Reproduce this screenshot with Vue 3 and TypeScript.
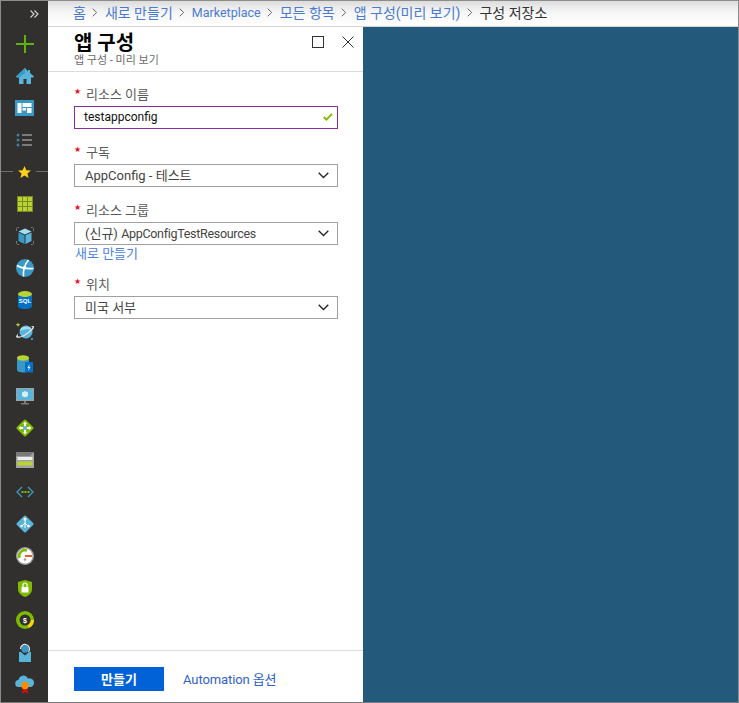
<script setup lang="ts">
const crumbs: string[] = ['홈', '새로 만들기', 'Marketplace', '모든 항목', '앱 구성(미리 보기)']
</script>

<template>
  <div class="frame">
    <aside class="rail">
      <div class="collapse">
        <svg width="9" height="8" viewBox="0 0 9 8" fill="none" stroke="#d8d8d8" stroke-width="1.1"><path d="M.5.5L4 4 .5 7.500M4.500.5L8 4 4.500 7.500" /></svg>
      </div>
      <div class="ico"><svg width="20" height="20" viewBox="0 0 20 20"><path d="M9 1h2v8h8v2h-8v8H9v-8H1V9h8z" fill="#5fb40b" /></svg></div>
      <div class="ico"><svg width="20" height="20" viewBox="0 0 20 20"><path d="M10 2L1 10.500l1 1h2V18h4.500v-5h3v5H16v-6.500h2l1-1L15 7V4h-2v1.500z" fill="#59b4d9" /><path d="M10 2v5l-6 4.500H2l-1-1z" fill="#3999c6" /></svg></div>
      <div class="ico"><svg width="19" height="16" viewBox="0 0 19 16"><rect width="19" height="16" fill="#3999c6" /><path d="M2.500 3h4v10h-4zM7.500 3h9v4h-9zM7.500 8h3.500v2.500H7.500zM12 8h4.500v5H12z" fill="#fff" /></svg></div>
      <div class="ico"><svg width="18" height="14" viewBox="0 0 18 14"><g fill="#3a7ea3"><circle cx="2" cy="2" r="1.500" /><circle cx="2" cy="7" r="1.500" /><circle cx="2" cy="12" r="1.500" /></g><g fill="#7a7a7a"><rect x="6" y="1" width="10" height="2" /><rect x="6" y="6" width="10" height="2" /><rect x="6" y="11" width="10" height="2" /></g></svg></div>
      <div class="ico star-row">
        <span class="tick"></span>
        <svg width="13" height="12" viewBox="0 0 14 13"><path d="M7 0l2 4.500 5 .4-3.800 3.200L11.400 13 7 10.400 2.600 13l1.200-4.900L0 4.900l5-.4z" fill="#fcd116" /></svg>
        <span class="tick"></span>
      </div>
      <div class="ico"><svg width="16" height="16" viewBox="0 0 16 16"><rect width="16" height="16" fill="#7a8a20" /><g fill="#b8d432"><rect x="1" y="1" width="4" height="4" /><rect x="6" y="1" width="4" height="4" /><rect x="11" y="1" width="4" height="4" /><rect x="1" y="6" width="4" height="4" /><rect x="6" y="6" width="4" height="4" /><rect x="11" y="6" width="4" height="4" /><rect x="1" y="11" width="4" height="4" /><rect x="6" y="11" width="4" height="4" /><rect x="11" y="11" width="4" height="4" /></g></svg></div>
      <div class="ico"><svg width="18" height="18" viewBox="0 0 18 18"><path d="M.5 4V1.500C.5 1 1 .5 2 .5h1M17.500 4V1.500c0-.5-.5-1-1.500-1h-1M.5 14v2.500c0 .5.500 1 1.500 1h1M17.500 14v2.500c0 .5-.5 1-1.500 1h-1" fill="none" stroke="#777" /><path d="M9 1.500l6.500 3L9 7.500l-6.500-3z" fill="#9fe0f5" /><path d="M2.500 5.500l6 2.800V17l-6-3z" fill="#3999c6" /><path d="M15.500 5.500l-6 2.800V17l6-3z" fill="#59b4d9" /></svg></div>
      <div class="ico"><svg width="18" height="18" viewBox="0 0 18 18"><circle cx="9" cy="9" r="9" fill="#3999c6" /><g fill="none" stroke="#fff" stroke-width="1.600"><path d="M1 6.500C5 9 11 10 17.500 9.500" /><path d="M12.500 1C9 5 7 11 7.500 17.500" /></g><circle cx="8.500" cy="8.800" r="1.800" fill="#fff" /></svg></div>
      <div class="ico"><svg width="14" height="18" viewBox="0 0 14 18"><path d="M0 3v12c0 1.800 3 3 7 3s7-1.200 7-3V3z" fill="#0072c6" /><ellipse cx="7" cy="3" rx="7" ry="3" fill="#b8d432" /><text x="7" y="12" text-anchor="middle" class="sql">SQL</text></svg></div>
      <div class="ico"><svg width="20" height="20" viewBox="0 0 20 20"><circle cx="11" cy="10" r="6.500" fill="#59b4d9" /><path d="M5 9a6 4 0 0 1 12-1c-3-1-8-1-12 1z" fill="#a5dcf0" /><path d="M15 4.500c3-1 4.500-.5 4 1-.6 2-4 5-8 7.500-4 2.400-8 3.500-9.500 2.500-1-.8 0-2.500 2-4.500-.8 1.600-1 2.800-.4 3.300 1 .7 4-.3 7.400-2.400C14 9.800 17 7 17.500 5.600 17.800 4.800 16.500 4.600 15 4.500z" fill="#e8e8e8" /><path d="M3 .5l.7 1.600 1.600.7-1.600.7L3 5.100l-.7-1.600L.7 2.800l1.600-.7z" fill="#b8d432" /><rect x="16" y="16" width="2" height="2" fill="#3999c6" /></svg></div>
      <div class="ico"><svg width="16" height="18" viewBox="0 0 16 18"><path d="M0 3v12c0 1.500 2.500 2.500 6 2.500V3z" fill="#3999c6" /><path d="M6 3h6v5H8v9.500H6z" fill="#3999c6" /><ellipse cx="6" cy="3" rx="6" ry="2.700" fill="#b8d432" /><rect x="8" y="7" width="8" height="10.500" fill="#0072c6" /><path d="M12.500 9l-2 4h1.300l-.8 3 2.500-4h-1.300z" fill="#fff" /></svg></div>
      <div class="ico"><svg width="18" height="17" viewBox="0 0 18 17"><rect width="18" height="13" fill="#a0a1a2" /><rect x="1" y="1" width="16" height="11" fill="#59b4d9" /><path d="M9 3l3 1.500v3.500L9 9.500 6 8V4.500z" fill="#d8eef7" /><rect x="8" y="13" width="2" height="2" fill="#7a7a7a" /><rect x="5" y="15" width="8" height="1.500" fill="#7a7a7a" /></svg></div>
      <div class="ico"><svg width="18" height="18" viewBox="0 0 18 18"><path d="M9 .5a1.500 1.500 0 0 1 1 .4L17.100 8a1.400 1.400 0 0 1 0 2L10 17.100a1.400 1.400 0 0 1-2 0L.9 10a1.400 1.400 0 0 1 0-2L8 .9A1.500 1.500 0 0 1 9 .5z" fill="#7fba00" /><path d="M9 2.500L11 5H10v3h3V7l2.500 2-2.500 2v-1h-3v3h1l-2 2.500L7 13h1v-3H5v1L2.500 9 5 7v1h3V5H7z" fill="#fff" /><circle cx="9" cy="9" r="2" fill="#59b4d9" /></svg></div>
      <div class="ico"><svg width="18" height="16" viewBox="0 0 18 16"><rect width="18" height="16" fill="#a0a1a2" /><path d="M0 0h18L14 4H0z" fill="#7a7a7a" /><rect x="1.500" y="5" width="15" height="3" fill="#eee" /><rect x="1.500" y="9.500" width="15" height="4" fill="#b8d432" /></svg></div>
      <div class="ico"><svg width="18" height="12" viewBox="0 0 18 12" fill="none"><path d="M6 1L1 6l5 5M12 1l5 5-5 5" stroke="#3999c6" stroke-width="1.300" /><g fill="#7fba00"><rect x="5.500" y="5" width="2" height="2" /><rect x="8.500" y="5" width="2" height="2" /><rect x="11.500" y="5" width="2" height="2" /></g></svg></div>
      <div class="ico"><svg width="18" height="18" viewBox="0 0 18 18"><path d="M9 .5a1.500 1.500 0 0 1 1 .4L17.100 8a1.400 1.400 0 0 1 0 2L10 17.100a1.400 1.400 0 0 1-2 0L.9 10a1.400 1.400 0 0 1 0-2L8 .9A1.500 1.500 0 0 1 9 .5z" fill="#59b4d9" /><path d="M9 3v10M9 8l-3 3M9 8l3 3" stroke="#fff" fill="none" /><circle cx="9" cy="4" r="1.500" fill="#fff" /><circle cx="5.500" cy="11" r="1.300" fill="#fff" /><circle cx="12.500" cy="11" r="1.300" fill="#fff" /></svg></div>
      <div class="ico"><svg width="18" height="18" viewBox="0 0 18 18"><circle cx="9" cy="9" r="9" fill="#a0a1a2" /><circle cx="9" cy="9" r="7.500" fill="#fff" /><path d="M3.600 11A5.700 5.700 0 0 1 11 3.600" fill="none" stroke="#7fba00" stroke-width="2.500" /><rect x="9" y="8" width="7" height="2" fill="#f05a28" /><circle cx="9" cy="12.500" r="1.300" fill="#a0a1a2" /></svg></div>
      <div class="ico"><svg width="14" height="17" viewBox="0 0 14 17"><path d="M0 2l7-2 7 2v7c0 4-3 6.500-7 8-4-1.500-7-4-7-8z" fill="#7fba00" /><rect x="3.500" y="7" width="7" height="5.500" fill="#fff" /><path d="M5 7V5a2 2 0 0 1 4 0v2" fill="none" stroke="#fff" stroke-width="1.200" /></svg></div>
      <div class="ico"><svg width="18" height="18" viewBox="0 0 18 18"><circle cx="9" cy="9" r="9" fill="#7fba00" /><path d="M18 9a9 9 0 0 1-5 8l-1.500-3a6 6 0 0 0 3.500-5z" fill="#fcd116" /><circle cx="9" cy="9" r="5.500" fill="#32302e" /><text x="9" y="11.500" text-anchor="middle" class="dollar">$</text></svg></div>
      <div class="ico"><svg width="14" height="19" viewBox="0 0 14 19"><rect x="1" y="9" width="12" height="10" fill="#59b4d9" /><path d="M3 9l4 3.500L11 9z" fill="#32302e" /><circle cx="7" cy="6" r="3.700" fill="#3999c6" /><path d="M2.500 6a4.500 4.500 0 1 1 8 2.800" fill="none" stroke="#e8e8e8" stroke-width="1.200" /></svg></div>
      <div class="ico"><svg width="20" height="20" viewBox="0 0 20 20"><path d="M4 13a3.500 3.500 0 0 1-.5-7A5 5 0 0 1 13 4.500a4.300 4.300 0 0 1 3 8.500z" fill="#59b4d9" /><path d="M7.500 13l-.5 7 3-2 3 2-.5-7z" fill="#ba141a" /><circle cx="10" cy="11.500" r="3.700" fill="#ff8c00" /></svg></div>
    </aside>

    <div class="main">
      <nav class="crumbs">
        <template v-for="c in crumbs" :key="c">
          <a class="crumb" :class="{ lat: c === 'Marketplace' }">{{ c }}</a>
          <svg class="sep" width="6" height="9" viewBox="0 0 6 9" fill="none" stroke="#6a6a6a"><path d="M.7.7l4 3.800-4 3.800" /></svg>
        </template>
        <span class="current">구성 저장소</span>
      </nav>
      <div class="stage">
        <section class="blade">
          <header class="head">
            <div>
              <h1>앱 구성</h1>
              <p>앱 구성 - 미리 보기</p>
            </div>
            <div class="controls">
              <svg width="12" height="12" viewBox="0 0 12 12" fill="none" stroke="#333"><rect x=".5" y=".5" width="11" height="11" /></svg>
              <svg width="12" height="12" viewBox="0 0 12 12" fill="none" stroke="#333"><path d="M.5.5l11 11M11.500.5l-11 11" /></svg>
            </div>
          </header>

          <form class="form">
            <div class="field">
              <label><i>★</i>리소스 이름</label>
              <div class="box active">
                <span class="input-text">testappconfig</span>
                <svg width="10" height="8" viewBox="0 0 11 9" fill="none" stroke="#7fba00" stroke-width="2"><path d="M.7 4.500l3 3L10 1" /></svg>
              </div>
            </div>
            <div class="field">
              <label><i>★</i>구독</label>
              <div class="box">
                <span>AppConfig - 테스트</span>
                <svg class="chev" width="11" height="7" viewBox="0 0 11 7" fill="none" stroke="#222" stroke-width="1.300"><path d="M.7.7l4.800 4.800L10.300.7" /></svg>
              </div>
            </div>
            <div class="field">
              <label><i>★</i>리소스 그룹</label>
              <div class="box">
                <span>(신규) <span class="tight">AppConfigTestResources</span></span>
                <svg class="chev" width="11" height="7" viewBox="0 0 11 7" fill="none" stroke="#222" stroke-width="1.300"><path d="M.7.7l4.800 4.800L10.300.7" /></svg>
              </div>
              <a class="new">새로 만들기</a>
            </div>
            <div class="field">
              <label><i>★</i>위치</label>
              <div class="box">
                <span>미국 서부</span>
                <svg class="chev" width="11" height="7" viewBox="0 0 11 7" fill="none" stroke="#222" stroke-width="1.300"><path d="M.7.7l4.800 4.800L10.300.7" /></svg>
              </div>
            </div>
          </form>

          <footer class="foot">
            <button type="button">만들기</button>
            <a>Automation 옵션</a>
          </footer>
        </section>
        <div class="canvas"></div>
      </div>
    </div>
  </div>
</template>

<style scoped>
.frame {
  width: 739px;
  height: 703px;
  box-sizing: border-box;
  display: flex;
  border: 1px solid #8c8c8c;
  border-bottom-color: #7a7a7a;
  font-family: Roboto, "Noto Sans CJK KR", sans-serif;
  font-size: 13px;
  overflow: hidden;
  background: #fff;
}
.rail {
  width: 47px;
  flex: none;
  background: #32302e;
  display: flex;
  flex-direction: column;
  align-items: center;
}
.collapse {
  height: 27px;
  width: 100%;
  display: flex;
  align-items: center;
  justify-content: flex-end;
  padding: 0 9px 1px 0;
  box-sizing: border-box;
}
.ico {
  height: 32px;
  flex: none;
  width: 100%;
  display: flex;
  align-items: center;
  justify-content: center;
}
.star-row { gap: 5px; padding-bottom: 1px; box-sizing: border-box; }
.tick { height: 1px; background: #6e6e6e; flex: 1; }
.sql { font: 700 6px "Liberation Sans", sans-serif; fill: #fff; }
.dollar { font: 700 7px "Liberation Sans", sans-serif; fill: #fff; }
.main {
  flex: 1;
  min-width: 0;
  display: flex;
  flex-direction: column;
}
.crumbs {
  height: 26px;
  box-sizing: border-box;
  flex: none;
  display: flex;
  align-items: center;
  gap: 6.500px;
  padding: 0 0 3px 25px;
  background: linear-gradient(#dcdcdc, #f6f6f6 45%, #fff);
  border-bottom: 1px solid #d4d4d4;
  white-space: nowrap;
  font-size: 14px;
}
.crumb { color: #4a7bd0; }
.crumb.lat { font-size: 12.500px; }
.current { color: #333; }
.sep { flex: none; }
.stage {
  flex: 1;
  display: flex;
  min-height: 0;
}
.blade {
  width: 315px;
  flex: none;
  display: flex;
  flex-direction: column;
  background: #fff;
}
.head {
  height: 44px;
  flex: none;
  display: flex;
  justify-content: space-between;
  padding: 0 9px 0 26px;
  border-bottom: 1px solid #dcdcdc;
}
h1 {
  margin: 4px 0 0;
  font-size: 20px;
  line-height: 24px;
  font-weight: 700;
  color: #000;
}
.head p {
  margin: -2px 0 0;
  font-size: 11px;
  line-height: 15px;
  color: #6a6a6a;
}
.controls {
  display: flex;
  gap: 18px;
  padding-top: 9px;
}
.form {
  flex: 1;
  display: flex;
  flex-direction: column;
  padding: 12px 25px 0 26px;
}
.field { display: flex; flex-direction: column; margin-bottom: 13px; }
label {
  height: 22px;
  box-sizing: border-box;
  padding-bottom: 4px;
  display: flex;
  align-items: center;
  color: #5a5a5a;
  font-size: 13px;
  white-space: pre;
}
label i {
  color: #e81123;
  font-style: normal;
  font-size: 8px;
  font-family: "DejaVu Sans", sans-serif;
  width: 12px;
  flex: none;
  padding-bottom: 3px;
}
.box {
  height: 23px;
  box-sizing: border-box;
  display: flex;
  align-items: center;
  justify-content: space-between;
  border: 1px solid #a0a0a0;
  padding: 0 8px 2px 10px;
  color: #444;
  white-space: nowrap;
}
.chev { margin-top: 2px; }
.tight { font-size: 12.500px; letter-spacing: -0.3px; }
.box.active {
  border: 1px solid #8a2da5;
  padding-left: 9px;
  padding-right: 4px;
  padding-bottom: 1px;
  color: #111;
}
.input-text { font-size: 12px; }
.new {
  color: #4a82dc;
  line-height: 16px;
  padding: 1px 0 0 1px;
  margin-bottom: -1px;
}
.foot {
  height: 52px;
  box-sizing: border-box;
  flex: none;
  display: flex;
  align-items: flex-start;
  gap: 19px;
  padding: 16px 25px 0 26px;
  border-top: 1px solid #dcdcdc;
}
.foot button {
  width: 90px;
  height: 24px;
  border: 0;
  background: #0062d6;
  color: #fff;
  font: 700 13px Roboto, "Noto Sans CJK KR", sans-serif;
  padding: 0 0 1px;
}
.foot a { color: #2f62c9; line-height: 26px; letter-spacing: -0.1px; }
.canvas {
  flex: 1;
  background: #235a7c;
}
</style>
